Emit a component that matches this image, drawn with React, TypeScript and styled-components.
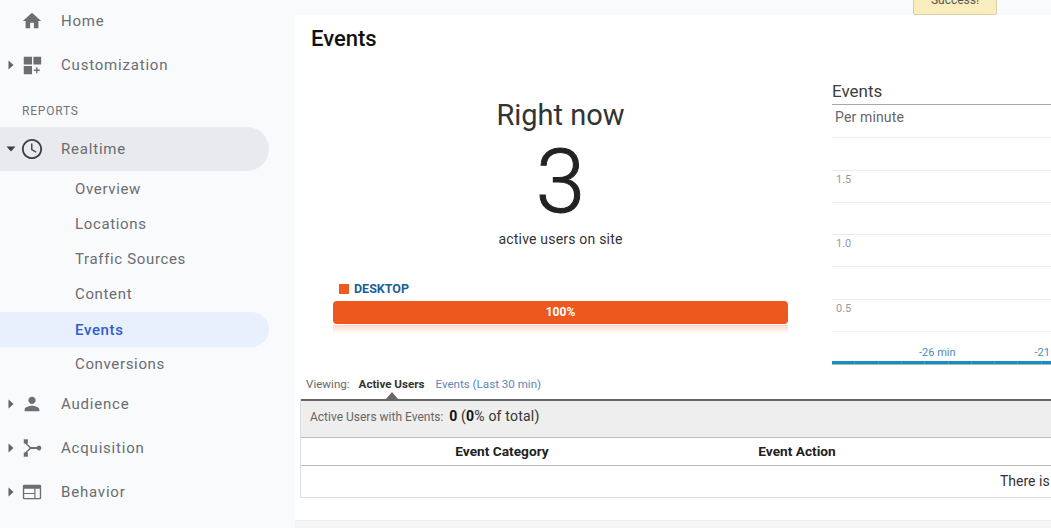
import React from "react";
import styled, { createGlobalStyle } from "styled-components";

const Global = createGlobalStyle`
  html, body { margin: 0; padding: 0; background: #f9fafc; }
  body { font-family: Roboto, "Liberation Sans", sans-serif; overflow: hidden; }
`;

const Page = styled.div`
  position: relative;
  display: flex;
  width: 1051px;
  height: 528px;
  overflow: hidden;
  background: #f9fafc;
`;

const Sidebar = styled.nav`
  flex: 0 0 295px;
  margin-top: -1px;
  display: flex;
  flex-direction: column;
`;

const NavRow = styled.div<{ $active?: boolean }>`
  display: flex;
  align-items: center;
  width: 269px;
  height: 44px;
  flex: none;
  border-radius: 0 22px 22px 0;
  background: ${(p) => (p.$active ? "#e8eaed" : "transparent")};
`;

const CaretSlot = styled.span`
  flex: 0 0 21px;
  display: flex;
  justify-content: center;
  color: #5f6368;
`;

const IconSlot = styled.span<{ $dark?: boolean }>`
  flex: 0 0 22px;
  height: 22px;
  color: ${(p) => (p.$dark ? "#3c4043" : "#6b6e72")};
  svg { display: block; width: 22px; height: 22px; fill: currentColor; }
`;

const NavLabel = styled.span`
  margin-left: 18px;
  font-size: 15px;
  letter-spacing: 0.8px;
  color: #6a6d71;
`;

const SectionLabel = styled.div`
  height: 40px;
  flex: none;
  box-sizing: border-box;
  padding: 17px 0 0 22px;
  font-size: 12px;
  line-height: 14px;
  letter-spacing: 0.8px;
  color: #70757a;
`;

const SubList = styled.div`
  display: flex;
  flex-direction: column;
  margin-top: 1px;
`;

const SubRow = styled.div<{ $active?: boolean }>`
  width: 269px;
  height: 35px;
  box-sizing: border-box;
  padding-left: 75px;
  line-height: ${(p) => (p.$active ? 36 : 35)}px;
  font-size: 15px;
  letter-spacing: 0.65px;
  border-radius: 0 18px 18px 0;
  color: ${(p) => (p.$active ? "#2f5fcb" : "#6a6d71")};
  font-weight: ${(p) => (p.$active ? 500 : 400)};
  background: ${(p) => (p.$active ? "#e8f0fe" : "transparent")};
`;

const Main = styled.main`
  flex: none;
  width: 756px;
  margin-top: 15px;
  height: 505px;
  background: #fff;
  overflow: hidden;
  display: flex;
  flex-direction: column;
`;

const Title = styled.h1`
  margin: 0;
  padding: 11px 0 0 16px;
  height: 39px;
  box-sizing: border-box;
  font-size: 22px;
  line-height: 26px;
  font-weight: 500;
  color: #111;
`;

const Realtime = styled.section`
  display: flex;
  height: 320px;
  flex: none;
`;

const NowColumn = styled.div`
  flex: none;
  width: 455px;
  margin-left: 38px;
  display: flex;
  flex-direction: column;
  align-items: center;
`;

const NowTitle = styled.div`
  margin-top: 43px;
  font-size: 29px;
  line-height: 36px;
  color: #333;
`;

const NowCount = styled.div`
  font-size: 89px;
  font-weight: 300;
  -webkit-text-stroke: 1px #222;
  line-height: 88px;
  margin-top: 5px;
  color: #222;
`;

const NowCaption = styled.div`
  margin-top: 4px;
  font-size: 14px;
  line-height: 18px;
  letter-spacing: 0.2px;
  color: #333;
`;

const Legend = styled.div`
  align-self: flex-start;
  margin: 33px 0 0 6px;
  display: flex;
  align-items: center;
  gap: 5px;
  font-size: 12.5px;
  line-height: 16px;
  font-weight: 700;
  color: #1a5f96;
`;

const LegendSwatch = styled.span`
  width: 10px;
  height: 10px;
  background: #ee5a1f;
`;

const ShareBar = styled.div`
  align-self: stretch;
  margin-top: 4px;
  height: 23px;
  border-radius: 4px;
  background: #ec581e;
  color: #fff;
  font-size: 12px;
  font-weight: 700;
  line-height: 22px;
  text-align: center;
`;

const BarGlow = styled.div`
  align-self: stretch;
  height: 9px;
  margin-top: 1px;
  background: linear-gradient(#fdd9c9, #ffffff);
`;

const Chart = styled.div`
  flex: none;
  width: 300px;
  margin: 28px 0 0 44px;
`;

const ChartTitle = styled.div`
  height: 23px;
  box-sizing: border-box;
  border-bottom: 1px solid #a8a8a8;
  font-size: 17px;
  line-height: 18px;
  color: #3c4043;
`;

const ChartSub = styled.div`
  height: 32px;
  padding-left: 3px;
  font-size: 14px;
  letter-spacing: 0.15px;
  line-height: 25px;
  color: #666;
`;

const Gridline = styled.div<{ $h: number }>`
  height: ${(p) => p.$h}px;
  box-sizing: border-box;
  border-top: 1px solid #ececec;
  padding: 2px 0 0 4px;
  font-size: 11px;
  line-height: 13px;
  color: #999;
`;

const AxisLabels = styled.div`
  display: flex;
  height: 30px;
  box-sizing: border-box;
  border-top: 1px solid #f2f2f2;
  font-size: 11px;
  line-height: 13px;
  color: #4a8cc0;
  padding: 14px 0 0 87px;
  gap: 79px;
  white-space: nowrap;
`;

const AxisTrack = styled.div`
  height: 4px;
  background: repeating-linear-gradient(
    to right,
    #1c8cbf 0,
    #1c8cbf 22.3px,
    #3f9ec9 22.3px,
    #3f9ec9 23.3px
  );
  border-bottom: 1px solid #9db8c6;
  box-sizing: border-box;
`;

const Tabs = styled.div`
  display: flex;
  align-items: baseline;
  padding-left: 11px;
  height: 20px;
  font-size: 11.6px;
  line-height: 20px;
`;

const TabsLabel = styled.span`
  color: #666;
  margin-right: 9px;
`;

const TabActive = styled.span`
  position: relative;
  font-weight: 700;
  color: #333;
  margin-right: 11px;
  &::after {
    content: "";
    position: absolute;
    left: 27px;
    top: 18px;
    border-left: 6px solid transparent;
    border-right: 6px solid transparent;
    border-bottom: 7px solid #666;
  }
`;

const TabLink = styled.span`
  color: #5d86b8;
`;

const Table = styled.div`
  margin: 5px 0 0 5px;
  width: 800px;
  border-left: 1px solid #ddd;
`;

const Summary = styled.div`
  height: 39px;
  box-sizing: border-box;
  border-top: 2px solid #666;
  border-bottom: 1px solid #bbb;
  background: #eee;
  padding-left: 9px;
  font-size: 12px;
  line-height: 31px;
  color: #666;
`;

const SummaryValue = styled.span`
  margin-left: 2px;
  font-size: 14px;
  letter-spacing: 0.2px;
  color: #333;
  b { color: #111; font-weight: 700; }
`;

const HeaderRow = styled.div`
  display: flex;
  height: 28px;
  box-sizing: border-box;
  border-bottom: 1px solid #bbb;
  font-size: 13.7px;
  line-height: 26px;
  font-weight: 700;
  color: #222;
`;

const HeaderCell = styled.div<{ $w: number }>`
  flex: 0 0 ${(p) => p.$w}px;
  text-align: center;
`;

const EmptyRow = styled.div`
  height: 32px;
  box-sizing: border-box;
  border-bottom: 1px solid #ddd;
  padding-left: 699px;
  font-size: 14px;
  line-height: 31px;
  color: #333;
  white-space: nowrap;
`;

const Footer = styled.div`
  position: absolute;
  left: 295px;
  right: 0;
  top: 520px;
  height: 8px;
  background: #f5f5f5;
  border-top: 1px solid #eee;
`;

const Toast = styled.div`
  position: absolute;
  left: 913px;
  top: -9px;
  width: 84px;
  height: 24px;
  box-sizing: border-box;
  background: #f9edbe;
  border: 1px solid #d9cfa3;
  border-radius: 2px;
  font-size: 12px;
  line-height: 17px;
  text-align: center;
  color: #555;
`;

const Right = () => (
  <svg width="6" height="10" viewBox="0 0 6 10" fill="currentColor"><path d="M0.5 0.5 5.5 5 0.5 9.5z" /></svg>
);
const Down = () => (
  <svg width="10" height="6" viewBox="0 0 10 6" fill="#3c4043"><path d="M0.5 0.5h9L5 5.5z" /></svg>
);

const paths: Record<string, React.ReactNode> = {
  home: <path d="M10 20v-6h4v6h5v-8h3L12 3 2 12h3v8z" />,
  custom: <path d="M3 3h9v8.500H3zM13.500 3H22v8.500h-8.500zM3 13h9v9H3zM16.500 14.500H18V17h2.500v1.500H18V21h-1.500v-2.500H14V17h2.500z" />,
  clock: <path d="M11.990 1C5.900 1 1 5.930 1 12s4.900 11 10.990 11C18.070 23 23 18.070 23 12S18.070 1 11.990 1zM12 21c-4.970 0-9-4.030-9-9s4.030-9 9-9 9 4.030 9 9-4.030 9-9 9zm.500-15H11v7l5.250 3.150.75-1.230-4.500-2.670z" />,
  person: <path d="M12 12c2.210 0 4-1.790 4-4s-1.790-4-4-4-4 1.790-4 4 1.790 4 4 4zm0 2c-2.670 0-8 1.340-8 4v2h16v-2c0-2.660-5.330-4-8-4z" />,
  acq: <path d="M3 2.500h4.500v4.500H6.400l4.200 4h6.600a2.600 2.600 0 1 1 0 2h-6.600l-4.200 4h1.100v4.500H3V17h1.300L9.400 12 4.300 7H3z" />,
  web: <path fillRule="evenodd" d="M3.500 4H20.500a1.500 1.500 0 0 1 1.500 1.500v13a1.500 1.500 0 0 1-1.500 1.500H3.500A1.500 1.500 0 0 1 2 18.500v-13A1.500 1.500 0 0 1 3.500 4zM3.500 8.500v4.500h11V8.500zM3.500 14.200v4.300h11v-4.300zM15.800 8.500v10h4.700v-10z" />,
};

const Nav = ({ label, icon, caret, active, dark }: { label: string; icon: string; caret?: "right" | "down"; active?: boolean; dark?: boolean }) => (
  <NavRow $active={active}>
    <CaretSlot>{caret === "right" ? <Right /> : caret === "down" ? <Down /> : null}</CaretSlot>
    <IconSlot $dark={dark}><svg viewBox="0 0 24 24">{paths[icon]}</svg></IconSlot>
    <NavLabel>{label}</NavLabel>
  </NavRow>
);

const subs = ["Overview", "Locations", "Traffic Sources", "Content", "Events", "Conversions"];

export default function App() {
  return (
    <Page>
      <Global />
      <Sidebar>
        <Nav label="Home" icon="home" />
        <Nav label="Customization" icon="custom" caret="right" />
        <SectionLabel>REPORTS</SectionLabel>
        <Nav label="Realtime" icon="clock" caret="down" active dark />
        <SubList>
          {subs.map((s) => (
            <SubRow key={s} $active={s === "Events"}>{s}</SubRow>
          ))}
        </SubList>
        <Nav label="Audience" icon="person" caret="right" />
        <Nav label="Acquisition" icon="acq" caret="right" />
        <Nav label="Behavior" icon="web" caret="right" />
      </Sidebar>
      <Main>
        <Title>Events</Title>
        <Realtime>
          <NowColumn>
            <NowTitle>Right now</NowTitle>
            <NowCount>3</NowCount>
            <NowCaption>active users on site</NowCaption>
            <Legend><LegendSwatch />DESKTOP</Legend>
            <ShareBar>100%</ShareBar>
            <BarGlow />
          </NowColumn>
          <Chart>
            <ChartTitle>Events</ChartTitle>
            <ChartSub>Per minute</ChartSub>
            <Gridline $h={33} />
            <Gridline $h={32}>1.5</Gridline>
            <Gridline $h={32} />
            <Gridline $h={32}>1.0</Gridline>
            <Gridline $h={33} />
            <Gridline $h={32}>0.5</Gridline>
            <AxisLabels>
              <span>-26 min</span>
              <span>-21 min</span>
            </AxisLabels>
            <AxisTrack />
          </Chart>
        </Realtime>
        <Tabs>
          <TabsLabel>Viewing:</TabsLabel>
          <TabActive>Active Users</TabActive>
          <TabLink>Events (Last 30 min)</TabLink>
        </Tabs>
        <Table>
          <Summary>
            Active Users with Events:<SummaryValue> <b>0</b> (<b>0</b>% of total)</SummaryValue>
          </Summary>
          <HeaderRow>
            <HeaderCell $w={402}>Event Category</HeaderCell>
            <HeaderCell $w={188}>Event Action</HeaderCell>
          </HeaderRow>
          <EmptyRow>There is no data for this view.</EmptyRow>
        </Table>
      </Main>
      <Footer />
      <Toast>Success!</Toast>
    </Page>
  );
}
